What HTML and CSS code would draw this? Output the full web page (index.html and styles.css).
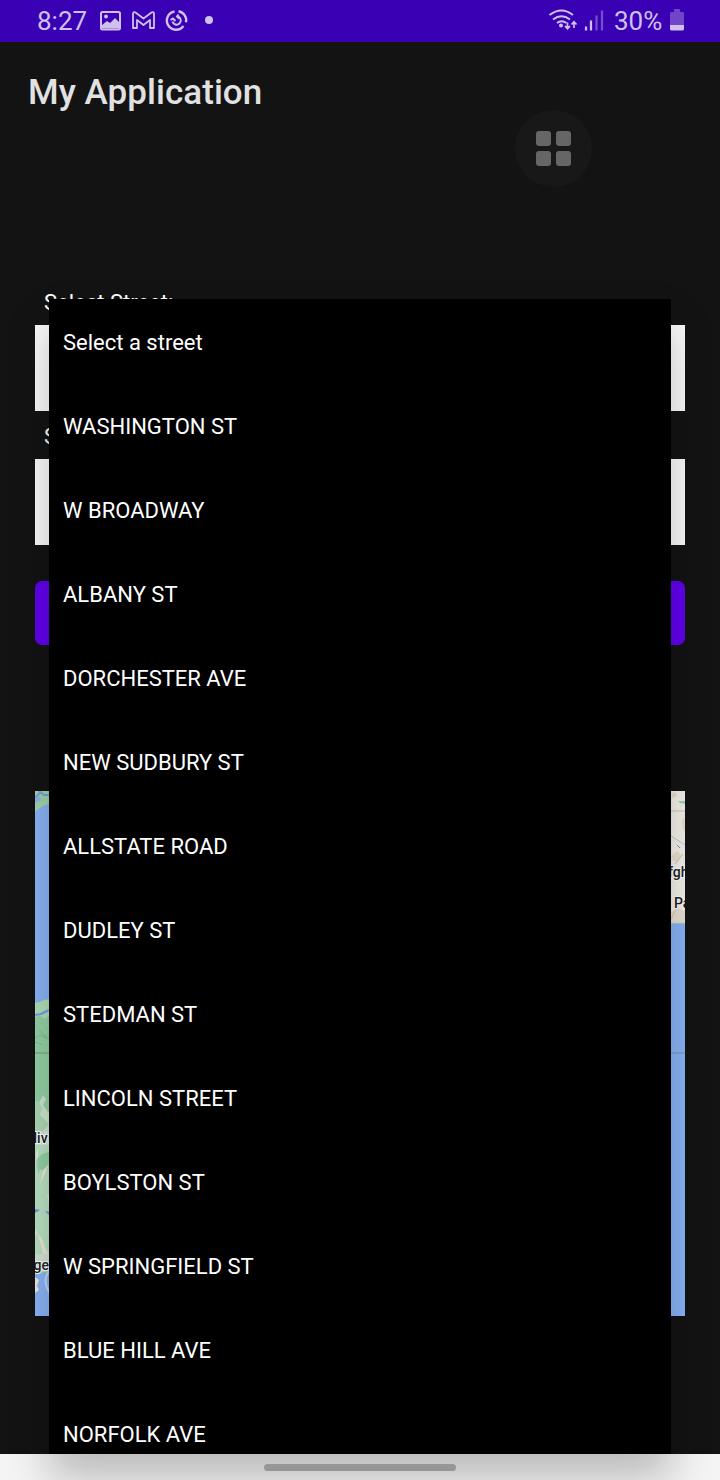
FILE: index.html
```html
<!DOCTYPE html>
<html lang="en">
<head>
<meta charset="utf-8">
<title>My Application</title>
<link rel="stylesheet" href="styles.css">
</head>
<body>
<div class="screen">
  <header class="status-bar">
    <span class="clock">8:27</span>
    <svg class="notifications" width="116" height="24" viewBox="0 0 116 24" fill="none" stroke="#cfc0ee" stroke-width="2">
      <rect x="2" y="3" width="19" height="17.500" rx="1.500"/>
      <circle cx="7" cy="7.500" r="2" fill="#cfc0ee" stroke="none"/>
      <path d="M3 16l5-4 3 2 5-5 4 4v6.500H3z" fill="#cfc0ee" stroke="none"/>
      <path d="M34 19V5q0-2.500 2.500-1.500l8 6 8-6q2.500-1 2.500 1.500v14h-4v-8l-6.500 5-6.500-5v8z" stroke-width="1.800" stroke-linejoin="round"/>
      <path d="M75.500 2.500a9.200 9.200 0 1 0 9 14.500M79.500 2.300a9.200 9.200 0 0 1 7.500 11" stroke-width="2.400"/>
      <path d="M79 7.500a4.200 4.200 0 1 1-5.500 5M71.500 11l2.500-1.500 2.500 2.500M79.500 5.500l-1.500 2 2 2" stroke-width="2"/>
      <circle cx="110" cy="11" r="4" fill="#cfc0ee" stroke="none"/>
    </svg>
    <svg class="signal" width="56" height="24" viewBox="0 0 56 24" fill="none" stroke="#cfc0ee" stroke-width="2">
      <path d="M1.500 6q12-9 23.500 0M5 10.500q8.500-6.500 17 0M9 14q4.500-3.500 9.500 0"/>
      <circle cx="13" cy="16.500" r="2" fill="#cfc0ee" stroke="none"/>
      <path d="M19.500 13.500v6M17 17l2.500 2.700L22 17M26 19v-6M23.500 15.500l2.500-2.700 2.500 2.700" stroke-width="1.700"/>
      <path d="M38 17.500v4M43 11.500v10" stroke-width="2.200"/>
      <path d="M48.500 6.500v15M54 1.500v20" stroke="#7450cb" stroke-width="2.200"/>
    </svg>
    <span class="percent">30%</span>
    <svg class="battery" width="14" height="24" viewBox="0 0 14 24">
      <path d="M4 1h6v3h2.500q1.500 0 1.500 1.500V17H0V5.500Q0 4 1.500 4H4z" fill="#7045c8"/>
      <path d="M0 17h14v4q0 1.500-1.500 1.500h-11Q0 22.500 0 21z" fill="#cfc0ee"/>
    </svg>
  </header>

  <main class="content">
    <h1 class="title">My Application</h1>
    <label class="label">Select Street:</label>
    <div class="spinner"></div>
    <label class="label second">S</label>
    <div class="spinner"></div>
    <div class="button"></div>
    <svg class="map" width="650" height="525" viewBox="0 0 650 525">
      <rect width="650" height="525" fill="#8ab4f8"/>
      <path d="M0 0h20v11l-7 2-7 3-6 5v-9l6-3-1-3-5 2z" fill="#a1d6ac"/>
      <path d="M0 7l5-5M4 0l5 4h7" fill="none" stroke="#70a4df" stroke-width="2"/>
      <path d="M0 212l5-1 4-2 8-1v276l-4-1-3-2-3 2-7-3z" fill="#94d2a5"/>
      <path d="M0 212l5-1 4-2 8-1v18l-3-1-4 3-5-3-5 1z" fill="#b1dfba"/>
      <path d="M0 224l6-1 8-4" fill="none" stroke="#6f9fea" stroke-width="2"/>
      <path d="M0 247l5-3 9 4M4 239l7 7M0 251l8 3" fill="none" stroke="#80bd93"/>
      <path d="M0 262h16" stroke="#7b9a80"/>
      <path d="M8 304l3 4-3 6 6 8v18H7l-4-8-3-3v-12l4-5z" fill="#cde7d0"/>
      <path d="M0 309l4 2 3 6-2 7 9 9-7 8H0z" fill="#add9b7"/>
      <path d="M0 340h20v14H0z" fill="#d5e9d8"/>
      <path d="M0 354h20v109H0z" fill="#bae3c4"/>
      <path d="M2 368l5-5 7-2v14l-4 6-5-3-2 5z" fill="#94d2a5"/>
      <path d="M1 362l2-5v9l-2 4zM8 379l6-6-4 10-5 10zM12 405l4-2v15zM3 443l5 6 2 8 4 6v3l-6-3zM0 437l2 5-2 3z" fill="#eee7da"/>
      <path d="M0 418l5 1-5 3zM10 420l5 1v4z" fill="#6598df"/>
      <path d="M0 463h15v16l-7 2-8-6z" fill="#d2e4d5"/>
      <path d="M0 486l4 3-2 6 2 4-4 3z" fill="#eeeae2"/>
      <path d="M16 478q-11 11 0 26" fill="none" stroke="#bfd6f9" stroke-width="2"/>
      <path d="M635 262h15" stroke="#7491c0"/>
      <path d="M630 0h20v132h-20z" fill="#f6f3ec"/>
      <path d="M636 4l4-3 2 3-4 3zM647 28l3-1v14l-3-4zM637 64l6-4 3 5-3 6-7-2zM636 121l6-4 8 3v11h-14z" fill="#ebe2d3"/>
      <path d="M643 10h7v3l-5-1z" fill="#a1d5b0"/>
      <path d="M636 20h14M636 45l14 9M640 73l8-10M636 128l4-8" fill="none" stroke="#cbc5c2"/>
      <path d="M642 54l3 3" stroke="#6598df"/>
      <path d="M636 132h14" stroke="#b5d7b7"/>
      <g class="map-text">
        <text x="-1.500" y="352">liv</text>
        <text x="-1.500" y="479">ge</text>
        <text x="633" y="85.500">fgh</text>
        <text x="639" y="117">Pa</text>
      </g>
    </svg>
  </main>

  <footer class="nav-bar"></footer>
  <ul class="dropdown">
    <li>Select a street</li>
    <li>WASHINGTON ST</li>
    <li>W BROADWAY</li>
    <li>ALBANY ST</li>
    <li>DORCHESTER AVE</li>
    <li>NEW SUDBURY ST</li>
    <li>ALLSTATE ROAD</li>
    <li>DUDLEY ST</li>
    <li>STEDMAN ST</li>
    <li>LINCOLN STREET</li>
    <li>BOYLSTON ST</li>
    <li>W SPRINGFIELD ST</li>
    <li>BLUE HILL AVE</li>
    <li>NORFOLK AVE</li>
  </ul>
  <div class="home-handle"></div>
  <div class="floating-button"><i></i><i></i><i></i><i></i></div>
</div>
</body>
</html>
```
FILE: styles.css
```css
* { box-sizing: border-box; }
body { margin: 0; background: #121212; font-family: Roboto, sans-serif; }
.screen {
  position: relative;
  display: flex;
  flex-direction: column;
  width: 720px;
  height: 1480px;
  overflow: hidden;
  background: #131313;
}
.status-bar {
  display: flex;
  align-items: center;
  flex: none;
  height: 42px;
  padding: 0 36px 0 37px;
  background: #3a00b3;
  color: #cfc0ee;
  font-size: 26px;
}
.clock { width: 62px; }
.notifications { flex: none; }
.signal { flex: none; margin-left: auto; margin-right: 10px; }
.percent { width: 49px; margin-right: 7px; }
.battery { flex: none; margin-bottom: 2px; }
.content { flex: 1; padding: 30px 35px 0; }
.title {
  margin: 0 0 0 -7px;
  height: 41px;
  line-height: 41px;
  font-size: 35px;
  font-weight: 500;
  letter-spacing: .05px;
  color: #e1e1e1;
}
.label {
  display: block;
  margin-top: 177px;
  padding-left: 9px;
  height: 35px;
  line-height: 26px;
  font-size: 22px;
  color: #fff;
}
.label.second { margin-top: 13px; }
.spinner { height: 86px; background: #fbfbfb; }
.button { height: 64px; margin-top: 36px; border-radius: 7px; background: #6200ee; }
.map { display: block; margin-top: 146px; }
.map-text { font: 500 14px Roboto, sans-serif; fill: #202124; stroke: #fff; stroke-width: 2px; paint-order: stroke; }
.nav-bar { flex: none; height: 26px; background: #f4f4f4; }
.dropdown {
  position: absolute;
  top: 299px;
  left: 49px;
  width: 622px;
  height: 1155px;
  margin: 0;
  padding: 2px 14px 0;
  overflow: hidden;
  list-style: none;
  background: #000;
  color: #fff;
  font-size: 22px;
  box-shadow: 0 24px 40px rgba(0, 0, 0, .24);
}
.dropdown li { height: 84px; line-height: 84px; white-space: nowrap; }
.home-handle {
  position: absolute;
  left: 264px;
  bottom: 9px;
  width: 192px;
  height: 7px;
  border-radius: 4px;
  background: #969696;
}
.floating-button {
  position: absolute;
  top: 110px;
  left: 515px;
  display: grid;
  grid-template-columns: 15px 15px;
  grid-auto-rows: 15px;
  gap: 5px;
  place-content: center;
  width: 77px;
  height: 77px;
  border-radius: 50%;
  background: #181818;
}
.floating-button i { border-radius: 3px; background: #666; }
```
